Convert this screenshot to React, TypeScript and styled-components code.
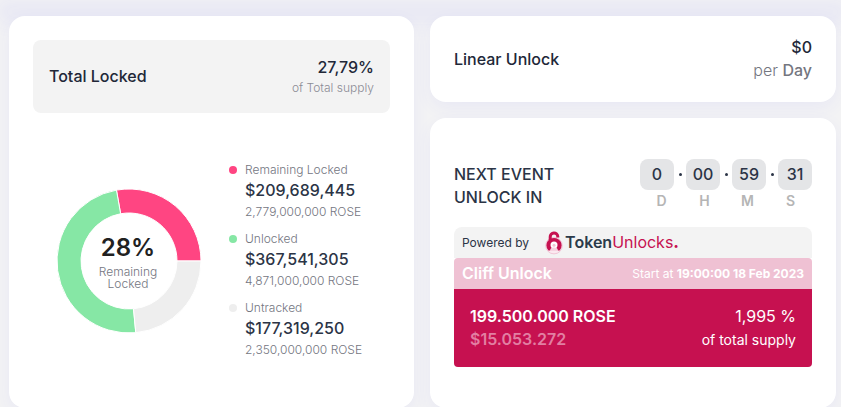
import React from "react";
import styled, { createGlobalStyle } from "styled-components";

const GlobalStyle = createGlobalStyle`
  * { box-sizing: border-box; }
  body {
    margin: 0;
    background: #f3f3f4;
    color: #212738;
    font-family: Inter, "Liberation Sans", sans-serif;
    font-size: 16px;
    line-height: 23px;
  }
`;

const shadow = "0 6px 18px rgba(60, 60, 255, 0.06)";

const PreviousSection = styled.div`
  height: 0;
  margin: 0 5px 16px 9px;
  box-shadow: 0 -4px 18px 12px rgba(60, 60, 255, 0.06);
`;

const Page = styled.main`
  display: grid;
  grid-template-columns: minmax(0, 405fr) minmax(0, 406fr);
  gap: 16px;
  padding: 0 5px 0 9px;
`;

const Column = styled.div`
  display: flex;
  flex-direction: column;
  gap: 16px;
`;

const Card = styled.section`
  background: #fff;
  border-radius: 16px;
  padding: 24px;
  box-shadow: ${shadow};
`;

const Row = styled.div`
  display: flex;
  align-items: center;
  justify-content: space-between;
`;

const LinearCard = styled(Card)`
  display: flex;
  align-items: center;
  justify-content: space-between;
  padding: 20px 24px;
`;

const EventCard = styled(Card)`
  flex: 1;
  padding: 41px 24px 40px;
`;

const TotalBox = styled(Row)`
  background: #f3f3f3;
  border-radius: 8px;
  padding: 16px;
`;

const Heading = styled.h2`
  margin: 0;
  font-size: 16px;
  font-weight: 500;
`;

const EventHeading = styled(Heading)`
  width: 120px;
  color: #2b3446;
`;

const RightText = styled.div`
  text-align: right;
`;

const Value = styled.div`
  font-weight: 500;
`;

const Note = styled.div`
  font-size: 12px;
  line-height: 18px;
  font-weight: 300;
  color: #8b8c95;
`;

const PerDay = styled.div`
  font-weight: 300;
  color: #74767f;
  strong { font-weight: 500; }
`;

const Breakdown = styled.div`
  display: flex;
  align-items: center;
  gap: 28px;
  padding: 48px 0 24px 24px;
`;

const Donut = styled.div`
  display: grid;
  width: 144px;
  height: 144px;
  flex: none;
  > * { grid-area: 1 / 1; }
`;

const DonutLabel = styled.div`
  align-self: center;
  text-align: center;
  font-size: 12px;
  line-height: 12px;
  font-weight: 300;
  color: #74767f;
  padding: 0 42px 0 40px;
  strong {
    display: block;
    font-size: 24px;
    line-height: 32px;
    font-weight: 600;
    color: #212121;
    padding-bottom: 2px;
  }
`;

const Legend = styled.ul`
  list-style: none;
  margin: 0;
  padding: 0;
  display: flex;
  flex-direction: column;
  gap: 8px;
`;

const LegendItem = styled.li`
  display: grid;
  grid-template-columns: 8px auto;
  column-gap: 8px;
  align-items: center;
`;

const Dot = styled.span<{ $color: string }>`
  width: 8px;
  height: 8px;
  border-radius: 50%;
  background: ${(p) => p.$color};
`;

const LegendName = styled.span`
  font-size: 12px;
  line-height: 18px;
  font-weight: 300;
  color: #74767f;
`;

const LegendValue = styled.strong`
  grid-column: 2;
  font-weight: 500;
  color: #2b3446;
`;

const LegendAmount = styled(LegendName)`
  grid-column: 2;
  line-height: 20px;
`;

const Timer = styled.div`
  width: 172px;
`;

const Digits = styled.div`
  display: flex;
  align-items: center;
`;

const Digit = styled.span`
  width: 34px;
  border-radius: 8px;
  background: #e4e5e7;
  color: #2b3446;
  font-weight: 500;
  line-height: 31px;
  text-align: center;
`;

const Separator = styled.span`
  width: 12px;
  display: flex;
  justify-content: center;
  &::before {
    content: "";
    width: 3px;
    height: 3px;
    border-radius: 50%;
    background: #2b3446;
  }
`;

const Units = styled.div`
  display: grid;
  grid-template-columns: repeat(4, 1fr);
  text-align: center;
  font-size: 14px;
  line-height: 22px;
  font-weight: 600;
  color: #b5b5b5;
`;

const Powered = styled.div`
  display: flex;
  align-items: center;
  gap: 16px;
  height: 31px;
  margin-top: 15px;
  padding: 0 8px;
  border-radius: 8px 8px 0 0;
  background: #f3f3f3;
  font-size: 12px;
  color: #2b3446;
`;

const Brand = styled.a`
  display: flex;
  align-items: center;
  gap: 2px;
  color: #c61150;
  font-size: 16px;
  text-decoration: none;
  strong { color: #2b3a4a; font-weight: 600; }
  b { font-weight: 800; }
`;

const CliffHead = styled(Row)`
  height: 31px;
  padding: 0 8px;
  border-radius: 4px 4px 0 0;
  background: #efc1d3;
  color: #fff;
  font-size: 12px;
  strong { font-weight: 700; }
`;

const CliffTitle = styled.h3`
  margin: 0;
  font-size: 16px;
  font-weight: 600;
`;

const CliffBody = styled(Row)`
  padding: 16px;
  border-radius: 0 0 4px 4px;
  background: #c61150;
  color: #fff;
`;

const CliffAmount = styled.div`
  font-weight: 600;
`;

const CliffUsd = styled(CliffAmount)`
  color: #e27fa2;
`;

const SupplyNote = styled.div`
  font-size: 14px;
`;

const segments = [
  { name: "Remaining Locked", value: "$209,689,445", amount: "2,779,000,000 ROSE", share: 27.79, color: "#ff4582" },
  { name: "Unlocked", value: "$367,541,305", amount: "4,871,000,000 ROSE", share: 48.71, color: "#86e7a5" },
  { name: "Untracked", value: "$177,319,250", amount: "2,350,000,000 ROSE", share: 23.5, color: "#eeeeee" },
];

function arcPath(from: number, to: number) {
  const point = (r: number, t: number) => {
    const a = t * Math.PI * 2;
    return `${(72 + r * Math.cos(a)).toFixed(3)} ${(72 - r * Math.sin(a)).toFixed(3)}`;
  };
  const large = to - from > 0.5 ? 1 : 0;
  return `M${point(72, from)}A72 72 0 ${large} 0 ${point(72, to)}L${point(48, to)}A48 48 0 ${large} 1 ${point(48, from)}Z`;
}

function DonutChart() {
  let start = 0;
  return (
    <svg width="144" height="144" viewBox="0 0 144 144" role="img" aria-label="Supply breakdown">
      {segments.map((s) => {
        const from = start;
        start += s.share / 100;
        return <path key={s.name} d={arcPath(from, start)} fill={s.color} stroke="#fff" />;
      })}
    </svg>
  );
}

function LockIcon() {
  return (
    <svg width="18" height="24" viewBox="0 0 18 24" aria-hidden="true">
      <circle cx="9" cy="14.6" r="8.3" fill="#fbe9f0" stroke="#edb5ca" strokeWidth=".7" />
      <path d="M5.2 9V6A3.8 3.8 0 0 1 12.8 5.6V6.4" fill="none" stroke="#c61150" strokeWidth="3" />
      <path d="M4.4 8.4Q9 5.6 13.6 8.4Q16.6 10.6 16.6 14.4Q16.6 17.6 14.6 19.6H3.4Q1.4 17.6 1.4 14.4Q1.4 10.6 4.4 8.4Z" fill="#c61150" />
      <circle cx="9" cy="14" r="3.5" fill="#fff" />
      <path d="M5 20Q5 16.6 9 16.6Q13 16.6 13 20Z" fill="#f6d3e0" />
      <circle cx="9" cy="14.2" r="1.5" fill="#f3c3d4" />
    </svg>
  );
}

export default function App() {
  const digits = ["0", "00", "59", "31"];
  return (
    <>
      <GlobalStyle />
      <PreviousSection />
      <Page>
        <Card>
          <TotalBox>
            <Heading>Total Locked</Heading>
            <RightText>
              <Value>27,79%</Value>
              <Note>of Total supply</Note>
            </RightText>
          </TotalBox>
          <Breakdown>
            <Donut>
              <DonutChart />
              <DonutLabel>
                <strong>28%</strong>
                Remaining Locked
              </DonutLabel>
            </Donut>
            <Legend>
              {segments.map((s) => (
                <LegendItem key={s.name}>
                  <Dot $color={s.color} />
                  <LegendName>{s.name}</LegendName>
                  <LegendValue>{s.value}</LegendValue>
                  <LegendAmount>{s.amount}</LegendAmount>
                </LegendItem>
              ))}
            </Legend>
          </Breakdown>
        </Card>
        <Column>
          <LinearCard>
            <Heading>Linear Unlock</Heading>
            <RightText>
              <Value>$0</Value>
              <PerDay>per <strong>Day</strong></PerDay>
            </RightText>
          </LinearCard>
          <EventCard>
            <Row>
              <EventHeading>NEXT EVENT UNLOCK IN</EventHeading>
              <Timer role="timer">
                <Digits>
                  {digits.map((d, i) => (
                    <React.Fragment key={i}>
                      {i > 0 && <Separator />}
                      <Digit>{d}</Digit>
                    </React.Fragment>
                  ))}
                </Digits>
                <Units>
                  <span>D</span><span>H</span><span>M</span><span>S</span>
                </Units>
              </Timer>
            </Row>
            <Powered>
              Powered by
              <Brand href="#">
                <LockIcon />
                <span><strong>Token</strong>Unlocks<b>.</b></span>
              </Brand>
            </Powered>
            <CliffHead>
              <CliffTitle>Cliff Unlock</CliffTitle>
              <span>Start at <strong>19:00:00 18 Feb 2023</strong></span>
            </CliffHead>
            <CliffBody>
              <div>
                <CliffAmount>199.500.000 ROSE</CliffAmount>
                <CliffUsd>$15.053.272</CliffUsd>
              </div>
              <RightText>
                <div>1,995 %</div>
                <SupplyNote>of total supply</SupplyNote>
              </RightText>
            </CliffBody>
          </EventCard>
        </Column>
      </Page>
    </>
  );
}
